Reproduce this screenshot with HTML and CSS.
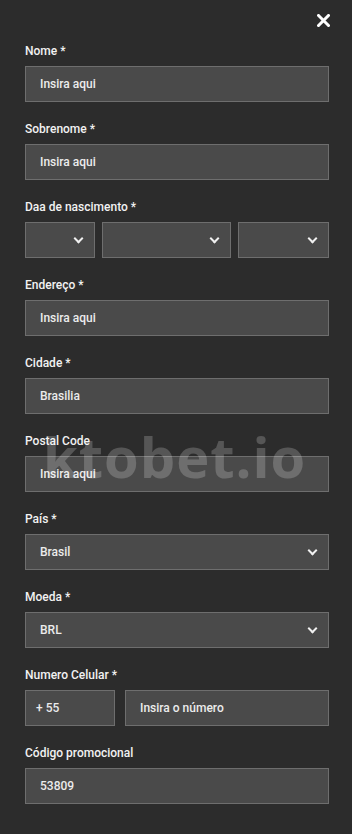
FILE: index.html
```html
<!DOCTYPE html>
<html lang="pt">
<head>
    <meta charset="UTF-8">
    <meta name="viewport" content="width=device-width, initial-scale=1.0">
    <title>Cadastro</title>
    <link rel="stylesheet" href="styles.css">
</head>
<body>
    <div class="panel">
        <div class="top-bar">
            <button class="close-btn" aria-label="Fechar">
                <svg width="13" height="13" viewBox="0 0 13 13"><path d="M1.5 1.5 L11.5 11.5 M11.5 1.5 L1.5 11.5" stroke="#fff" stroke-width="3" stroke-linecap="square"/></svg>
            </button>
        </div>

        <div class="form-group">
            <label>Nome *</label>
            <div class="field">Insira aqui</div>
        </div>
        <div class="form-group">
            <label>Sobrenome *</label>
            <div class="field">Insira aqui</div>
        </div>
        <div class="form-group">
            <label>Daa de nascimento *</label>
            <div class="row date-row">
                <div class="field select day"><span></span><i class="chev"></i></div>
                <div class="field select month"><span></span><i class="chev"></i></div>
                <div class="field select year"><span></span><i class="chev"></i></div>
            </div>
        </div>
        <div class="form-group">
            <label>Endereço *</label>
            <div class="field">Insira aqui</div>
        </div>
        <div class="form-group">
            <label>Cidade *</label>
            <div class="field">Brasilia</div>
        </div>
        <div class="form-group">
            <label>Postal Code</label>
            <div class="field">Insira aqui</div>
        </div>
        <div class="form-group">
            <label>País *</label>
            <div class="field select"><span>Brasil</span><i class="chev"></i></div>
        </div>
        <div class="form-group">
            <label>Moeda *</label>
            <div class="field select"><span>BRL</span><i class="chev"></i></div>
        </div>
        <div class="form-group">
            <label>Numero Celular *</label>
            <div class="row phone-row">
                <div class="field code">+ 55</div>
                <div class="field number">Insira o número</div>
            </div>
        </div>
        <div class="form-group promo">
            <label>Código promocional</label>
            <div class="field">53809</div>
        </div>

        <div class="watermark">ktobet.io</div>
    </div>
</body>
</html>
```

FILE: styles.css
```css
body{
    margin: 0;
    background-color: #2c2c2c;
    font-family: Roboto, "Liberation Sans", sans-serif;
    color: #f0f0f0;
}
.panel{
    position: relative;
    padding: 0 23px 0 25px;
    height: 834px;
    box-sizing: border-box;
}
.top-bar{
    display: flex;
    justify-content: flex-end;
    height: 43px;
    padding-top: 14px;
    box-sizing: border-box;
}
.close-btn{
    background: none;
    border: none;
    padding: 0;
    margin-right: -1px;
    width: 14px;
    height: 14px;
    cursor: pointer;
}
.form-group{
    margin-bottom: 19px;
}
.promo{
    margin-top: 1px;
}
label{
    display: block;
    font-size: 12px;
    font-weight: 500;
    line-height: 16px;
    margin-bottom: 7px;
    color: #f2f2f2;
}
.field{
    display: flex;
    align-items: center;
    height: 36px;
    box-sizing: border-box;
    background-color: #4a4a4a;
    border: 1px solid #6e6e6e;
    padding-left: 14px;
    font-size: 12px;
    font-weight: 500;
    color: #ececec;
}
.select{
    justify-content: space-between;
    padding-right: 12px;
}
.chev{
    width: 5px;
    height: 5px;
    border-right: 2px solid #f0f0f0;
    border-bottom: 2px solid #f0f0f0;
    transform: rotate(45deg);
    margin-top: -4px;
}
.row{
    display: flex;
}
.date-row{
    gap: 7px;
}
.date-row .day{
    width: 70px;
}
.date-row .month{
    width: 129px;
}
.date-row .year{
    flex: 1;
}
.phone-row{
    gap: 10px;
}
.phone-row .code{
    width: 90px;
    padding-left: 10px;
}
.phone-row .number{
    flex: 1;
}
.watermark{
    position: absolute;
    left: 43px;
    top: 418px;
    font-family: "Open Sans", sans-serif;
    font-weight: 700;
    font-size: 56px;
    letter-spacing: 1px;
    color: rgba(255, 255, 255, 0.2);
    pointer-events: none;
}
```
